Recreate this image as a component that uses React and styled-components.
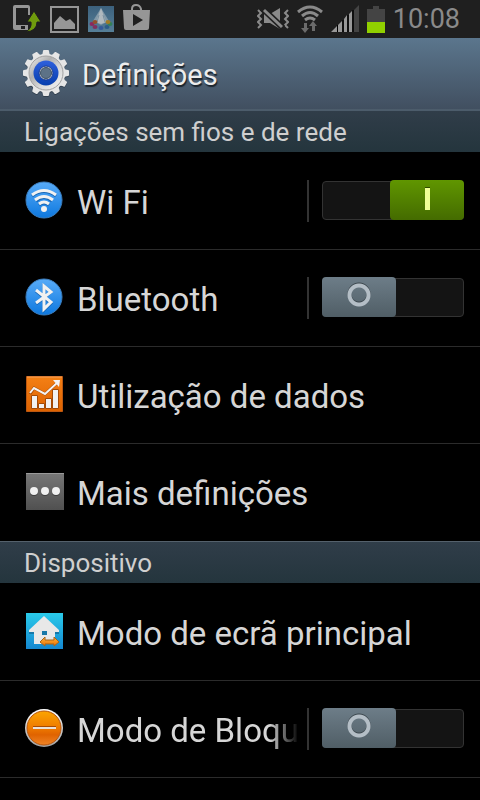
import React, { useState } from 'react';
import styled, { createGlobalStyle } from 'styled-components';

const GlobalStyle = createGlobalStyle`
  * {
    box-sizing: border-box;
  }

  body {
    margin: 0;
    background: #000;
    color: #d6d6d6;
    font-family: Roboto, 'Noto Sans', sans-serif;
  }
`;

const Screen = styled.div`
  min-height: 100vh;
  background: #000;
  overflow: hidden;
`;

const StatusBar = styled.div`
  display: flex;
  align-items: center;
  justify-content: space-between;
  height: 38px;
  padding: 0 20px 0 13px;
  background: #1f1f1f;
  color: #8a8a8a;
`;

const StatusGroup = styled.div`
  display: flex;
  align-items: center;
  gap: ${(props) => props.$gap}px;
`;

const Clock = styled.time`
  font-size: 27px;
  line-height: 38px;
`;

const Header = styled.header`
  display: flex;
  align-items: center;
  gap: 12px;
  height: 73px;
  padding: 0 22px;
  background: linear-gradient(#5b768d, #414f60);
  border-bottom: 2px solid #4c5c6b;
`;

const Title = styled.h1`
  margin: 0;
  padding-top: 2px;
  color: #ececec;
  font-size: 29px;
  font-weight: 400;
  line-height: 36px;
  text-shadow: 1px 2px 1px #1c242c;
`;

const SectionTitle = styled.h2`
  height: ${(props) => (props.$first ? 41 : 42)}px;
  margin: 0 0 1px;
  padding: 0 24px;
  border-top: ${(props) => (props.$first ? 'none' : '1px solid #55616c')};
  background: linear-gradient(#303d49, #24353d);
  color: #cfcfcf;
  font-size: 26px;
  font-weight: 400;
  line-height: 42px;
`;

const List = styled.ul`
  margin: 0;
  padding: 0;
  list-style: none;
`;

const Row = styled.li`
  display: flex;
  align-items: center;
  height: 97px;
  padding: 0 16px 0 24px;
  border-bottom: 1px solid ${(props) => (props.$last ? '#000' : '#2b2b2b')};
`;

const RowIcon = styled.span`
  display: flex;
  flex: none;
  margin-right: 13px;
  padding-bottom: 2px;
`;

const RowLabel = styled.label`
  flex: 1;
  min-width: 0;
  overflow: hidden;
  padding-top: 4px;
  font-size: 33px;
  line-height: 44px;
  white-space: nowrap;
  ${(props) =>
    props.$fade &&
    'mask-image: linear-gradient(to right, #000 calc(100% - 30px), transparent);'}
`;

const RowLink = styled.a`
  flex: 1;
  min-width: 0;
  padding-top: 4px;
  color: inherit;
  font-size: 33px;
  line-height: 44px;
  text-decoration: none;
  white-space: nowrap;
`;

const SwitchArea = styled.div`
  flex: none;
  height: 42px;
  margin-left: 8px;
  padding-left: 13px;
  border-left: 2px solid #333;
`;

const Switch = styled.input`
  appearance: none;
  display: flex;
  justify-content: flex-start;
  width: 142px;
  height: 39px;
  margin: 1px 0 0;
  border: 1px solid #333;
  border-radius: 4px;
  background: #141414;
  cursor: pointer;

  &::before {
    content: '';
    width: 74px;
    height: 40px;
    margin: -2px -1px -1px;
    border-radius: 4px;
    background:
      radial-gradient(circle at 37px 18px, transparent 7px, #b4bec6 8px, #b4bec6 11px, transparent 12px),
      radial-gradient(circle at 37px 17px, transparent 7px, #3c474e 8px, #3c474e 11px, transparent 12px),
      linear-gradient(#6d7d88, #505e66);
  }

  &:checked {
    justify-content: flex-end;
  }

  &:checked::before {
    background:
      linear-gradient(#efff96, #efff96) no-repeat 35px 8px / 5px 22px,
      linear-gradient(#2f4a00, #2f4a00) no-repeat 35px 7px / 5px 22px,
      linear-gradient(#609600, #446b00);
  }
`;

function TransferIcon() {
  return (
    <svg width="28" height="28" viewBox="0 0 28 28" aria-hidden="true">
      <path fill="#969696" fillRule="evenodd" d="M2 0h13q2 0 2 2v8h-2V3H3v17h12v5H2q-2 0-2-2V2q0-2 2-2zM8 21v3h4v-3z" />
      <path fill="#6f9b0d" stroke="#1f1f1f" strokeWidth="1" d="M21 6l7 11h-4q0 9-11 10 6-4 5-10h-4z" />
    </svg>
  );
}

function GalleryIcon() {
  return (
    <svg width="29" height="27" viewBox="0 0 29 27" aria-hidden="true">
      <path fill="none" stroke="#969696" strokeWidth="2" d="M1 1h27v25H1z" />
      <path fill="#969696" d="M4 23v-6l6-7 6 5 4-2 5 5v5z" />
    </svg>
  );
}

function PhotoAppIcon() {
  const dots = [
    ['#8a285f', 4, 18], ['#7f315f', 7, 21], ['#355a9b', 13, 22], ['#2b5d88', 19, 21],
    ['#338058', 22, 18], ['#a07b25', 20, 16], ['#92502d', 7, 16],
  ];
  return (
    <svg width="26" height="26" viewBox="0 0 26 26" aria-hidden="true">
      <defs>
        <linearGradient id="photoBg" x2="0" y2="1">
          <stop stopColor="#3c617d" />
          <stop offset="1" stopColor="#567f98" />
        </linearGradient>
      </defs>
      <path fill="url(#photoBg)" d="M0 0h26v26H0z" />
      <path fill="#8198a7" d="M13 2l8 13-8 4-8-4z" />
      <path fill="#b0b9be" d="M13 2l5 14-5 2-5-2z" />
      <path stroke="#7890a0" strokeWidth="1" d="M11 9l-2 7M15 9l2 7" />
      {dots.map(([color, x, y]) => (
        <ellipse key={color} cx={x} cy={y} rx="2.5" ry="2" fill={color} />
      ))}
    </svg>
  );
}

function StoreIcon() {
  return (
    <svg width="27" height="30" viewBox="0 0 27 30" aria-hidden="true">
      <path fill="none" stroke="#969696" strokeWidth="2" d="M9 7V5q0-4 4-4t5 4v2" />
      <path fill="#969696" fillRule="evenodd" d="M0 6h27l-1 18q0 2-2 2H3q-2 0-2-2zM10 10v12l10-6z" />
    </svg>
  );
}

function VibrateIcon() {
  return (
    <svg width="32" height="22" viewBox="0 0 32 22" aria-hidden="true">
      <path fill="none" stroke="#8a8a8a" strokeWidth="2" d="M1 2l3 3-3 3 3 3-3 3 3 3-3 3M31 2l-3 3 3 3-3 3 3 3-3 3 3 3" />
      <path fill="#8a8a8a" d="M7 6h6l10-6v21l-10-6H7z" />
      <path stroke="#1f1f1f" strokeWidth="6" d="M5 0l21 20" />
      <path stroke="#8a8a8a" strokeWidth="3" d="M7 2l18 17" />
    </svg>
  );
}

function WifiStatusIcon() {
  return (
    <svg width="26" height="28" viewBox="0 0 26 28" aria-hidden="true">
      <g fill="none" stroke="#8a8a8a" strokeWidth="3">
        <path d="M1 7q12-10 24 0" />
        <path d="M5 11q8-7 16 0" />
        <path d="M8 15q5-4 10 0" />
      </g>
      <path fill="#6b6b6b" d="M7 18h3v5h2l-4 5-4-5h3zM15 26v-5h-3l4-5 4 5h-2v5z" />
    </svg>
  );
}

function SignalIcon() {
  return (
    <svg width="28" height="28" viewBox="0 0 28 28" aria-hidden="true">
      <path fill="#989898" d="M0 27l6-6v6zM7 20l4-4v11H7zM13 14l3-4v17h-3zM18 9l3-3v21h-3z" />
      <path fill="#444" d="M23 5l5-5v27h-5z" />
      <path stroke="#000" strokeWidth="1" d="M6.500 20v7M12 15v12M17 10v17M22 5v22" />
    </svg>
  );
}

function BatteryIcon() {
  return (
    <svg width="18" height="27" viewBox="0 0 18 27" aria-hidden="true">
      <path fill="#444" d="M6 0h6v3h6v13H0V3h6z" />
      <path fill="#91d000" d="M0 16h18v11H0z" />
    </svg>
  );
}

function GearIcon() {
  const teeth = Array.from({ length: 12 }, (_, i) => i * 30);
  return (
    <svg width="48" height="50" viewBox="-24 -24 48 50" aria-hidden="true">
      <defs>
        <linearGradient id="gearFace" x2="1" y2="1">
          <stop stopColor="#f4f4f4" />
          <stop offset="0.350" stopColor="#b0b0b0" />
          <stop offset="0.600" stopColor="#d8d8d8" />
          <stop offset="1" stopColor="#f4f4f4" />
        </linearGradient>
        <linearGradient id="gearBlue" x2="0" y2="1">
          <stop stopColor="#2f60dc" />
          <stop offset="1" stopColor="#063eae" />
        </linearGradient>
        <g id="gearShape">
          <circle r="19" />
          {teeth.map((angle) => (
            <path key={angle} d="M-5 -18q2 -1 2 -4q0 -1 1 -1h4q1 0 1 1q0 3 2 4z" transform={`rotate(${angle})`} />
          ))}
        </g>
      </defs>
      <use href="#gearShape" y="1" fill="#26323e" opacity="0.600" />
      <use href="#gearShape" fill="#e6e6e6" />
      <circle r="17" fill="url(#gearFace)" stroke="#a2a2a2" strokeWidth="1" />
      <circle r="12.500" fill="url(#gearBlue)" />
      <circle r="7" fill="#d8d8d8" stroke="#173a91" strokeWidth="1" />
      <circle r="5.500" fill="#5d7287" stroke="#3f5265" strokeWidth="1" />
    </svg>
  );
}

function BlueDisc({ id, children }) {
  return (
    <svg width="40" height="40" viewBox="0 0 40 40" aria-hidden="true">
      <defs>
        <linearGradient id={id} x2="0" y2="1">
          <stop stopColor="#58abf8" />
          <stop offset="1" stopColor="#0d78df" />
        </linearGradient>
      </defs>
      <circle cx="20" cy="20" r="18" fill={`url(#${id})`} stroke="#3c7dbc" />
      {children}
    </svg>
  );
}

function WifiIcon() {
  return (
    <BlueDisc id="wifiDisc">
      <g fill="none" strokeWidth="3">
        <path stroke="#1766b4" d="M8 16q12-9 24 0M12 21q8-7 16 0M15 25q5-4 10 0" />
        <path stroke="#f1f1f1" d="M8 15q12-9 24 0M11 20q9-7 18 0M15 24q5-4 10 0" />
      </g>
      <circle cx="20" cy="29" r="3" fill="#f1f1f1" />
    </BlueDisc>
  );
}

function BluetoothIcon() {
  return (
    <BlueDisc id="btDisc">
      <path fill="none" stroke="#1766b4" strokeWidth="3" d="M12 14l15 12-7 7V9l7 6-15 12" />
      <path fill="none" stroke="#f1f1f1" strokeWidth="3" d="M12 13l15 12-7 7V9l7 6-15 11" />
    </BlueDisc>
  );
}

function DataUsageIcon() {
  return (
    <svg width="40" height="38" viewBox="0 0 40 38" aria-hidden="true">
      <defs>
        <linearGradient id="dataBg" x2="0" y2="1">
          <stop stopColor="#f48015" />
          <stop offset="1" stopColor="#dd6200" />
        </linearGradient>
      </defs>
      <path fill="url(#dataBg)" stroke="#bb5710" d="M2.500 1.500h36v35h-36z" />
      <path stroke="#f8a35a" d="M3 2h35" />
      <g fill="#f1f1f1" stroke="#a44a05" strokeWidth="1">
        <path d="M7.500 20.500h6v13h-6zM14.500 28.500h6v5h-6zM21.500 23.500h6v10h-6zM28.500 14.500h6v19h-6z" />
      </g>
      <path fill="none" stroke="#a44a05" strokeWidth="3" d="M6 19l4-6 11 6L34 7" />
      <path fill="none" stroke="#f4f4f4" strokeWidth="2" d="M6 18l4-5 11 6L34 7" />
      <path fill="#f4f4f4" d="M29 5h7l-1 7z" />
    </svg>
  );
}

function MoreIcon() {
  return (
    <svg width="40" height="38" viewBox="0 0 40 38" aria-hidden="true">
      <defs>
        <linearGradient id="moreBg" x2="0" y2="1">
          <stop stopColor="#777" />
          <stop offset="1" stopColor="#505050" />
        </linearGradient>
      </defs>
      <path fill="url(#moreBg)" d="M2 1h38v37H2z" />
      <path stroke="#999" d="M2 1.500h38" />
      {[10, 21, 32].map((x) => (
        <g key={x}>
          <circle cx={x} cy="20" r="4" fill="#3f3f3f" />
          <circle cx={x} cy="19" r="4" fill="#f1f1f1" />
        </g>
      ))}
    </svg>
  );
}

function HomeModeIcon() {
  return (
    <svg width="40" height="38" viewBox="0 0 40 38" aria-hidden="true">
      <defs>
        <linearGradient id="homeBg" x2="0" y2="1">
          <stop stopColor="#2acbea" />
          <stop offset="1" stopColor="#1487d0" />
        </linearGradient>
        <linearGradient id="homeArrow" x2="0" y2="1">
          <stop stopColor="#ffb43c" />
          <stop offset="1" stopColor="#e87205" />
        </linearGradient>
      </defs>
      <path fill="url(#homeBg)" d="M2 1h37v36H2z" />
      <path fill="#1878a8" d="M20 5l15 14v3h-4v10H11V22H5v-3z" />
      <path fill="#e8e8e8" fillRule="evenodd" d="M20 4l15 14v2h-4v12H10V20H5v-2zM18 19v4h5v-4z" />
      <path fill="url(#homeArrow)" stroke="#a86418" strokeWidth="1" d="M16 30l5-5v3h9v-3l5 5-5 4v-2h-9v2z" />
    </svg>
  );
}

function BlockingIcon() {
  return (
    <svg width="40" height="40" viewBox="0 0 40 40" aria-hidden="true">
      <defs>
        <linearGradient id="blockBg" x2="0" y2="1">
          <stop stopColor="#fca500" />
          <stop offset="0.500" stopColor="#ee7a00" />
          <stop offset="0.700" stopColor="#e06300" />
          <stop offset="1" stopColor="#f08426" />
        </linearGradient>
        <linearGradient id="blockRim" x2="0" y2="1">
          <stop stopColor="#fff" />
          <stop offset="1" stopColor="#a0a0a0" />
        </linearGradient>
      </defs>
      <circle cx="20" cy="20" r="19" fill="url(#blockRim)" />
      <circle cx="20" cy="20" r="17" fill="url(#blockBg)" stroke="#b9560c" />
      <path fill="#a84a00" d="M9 18h23v1H9z" />
      <path fill="#e8e0d8" d="M9 19h23v2H9z" />
    </svg>
  );
}

const sections = [
  {
    title: 'Ligações sem fios e de rede',
    items: [
      { id: 'wifi', label: 'Wi Fi', icon: WifiIcon, toggle: true },
      { id: 'bluetooth', label: 'Bluetooth', icon: BluetoothIcon, toggle: true },
      { id: 'data', label: 'Utilização de dados', icon: DataUsageIcon },
      { id: 'more', label: 'Mais definições', icon: MoreIcon, last: true },
    ],
  },
  {
    title: 'Dispositivo',
    items: [
      { id: 'home', label: 'Modo de ecrã principal', icon: HomeModeIcon },
      { id: 'blocking', label: 'Modo de Bloqueio', icon: BlockingIcon, toggle: true, fade: true },
    ],
  },
];

function SettingsRow({ item, checked, onToggle }) {
  const Icon = item.icon;

  return (
    <Row $last={item.last}>
      <RowIcon>
        <Icon />
      </RowIcon>
      {item.toggle ? (
        <>
          <RowLabel htmlFor={item.id} $fade={item.fade}>{item.label}</RowLabel>
          <SwitchArea>
            <Switch
              type="checkbox"
              role="switch"
              id={item.id}
              checked={checked}
              onChange={() => onToggle(item.id)}
            />
          </SwitchArea>
        </>
      ) : (
        <RowLink href={`#${item.id}`}>{item.label}</RowLink>
      )}
    </Row>
  );
}

function App() {
  const [enabled, setEnabled] = useState({ wifi: true, bluetooth: false, blocking: false });

  const handleToggle = (id) => {
    setEnabled((prev) => ({ ...prev, [id]: !prev[id] }));
  };

  return (
    <Screen>
      <GlobalStyle />
      <StatusBar>
        <StatusGroup $gap={9}>
          <TransferIcon />
          <GalleryIcon />
          <PhotoAppIcon />
          <StoreIcon />
        </StatusGroup>
        <StatusGroup $gap={8}>
          <VibrateIcon />
          <WifiStatusIcon />
          <SignalIcon />
          <BatteryIcon />
          <Clock>10:08</Clock>
        </StatusGroup>
      </StatusBar>
      <Header>
        <GearIcon />
        <Title>Definições</Title>
      </Header>
      <main>
        {sections.map((section, index) => (
          <section key={section.title}>
            <SectionTitle $first={index === 0}>{section.title}</SectionTitle>
            <List>
              {section.items.map((item) => (
                <SettingsRow
                  key={item.id}
                  item={item}
                  checked={Boolean(enabled[item.id])}
                  onToggle={handleToggle}
                />
              ))}
            </List>
          </section>
        ))}
      </main>
    </Screen>
  );
}

export default App;
